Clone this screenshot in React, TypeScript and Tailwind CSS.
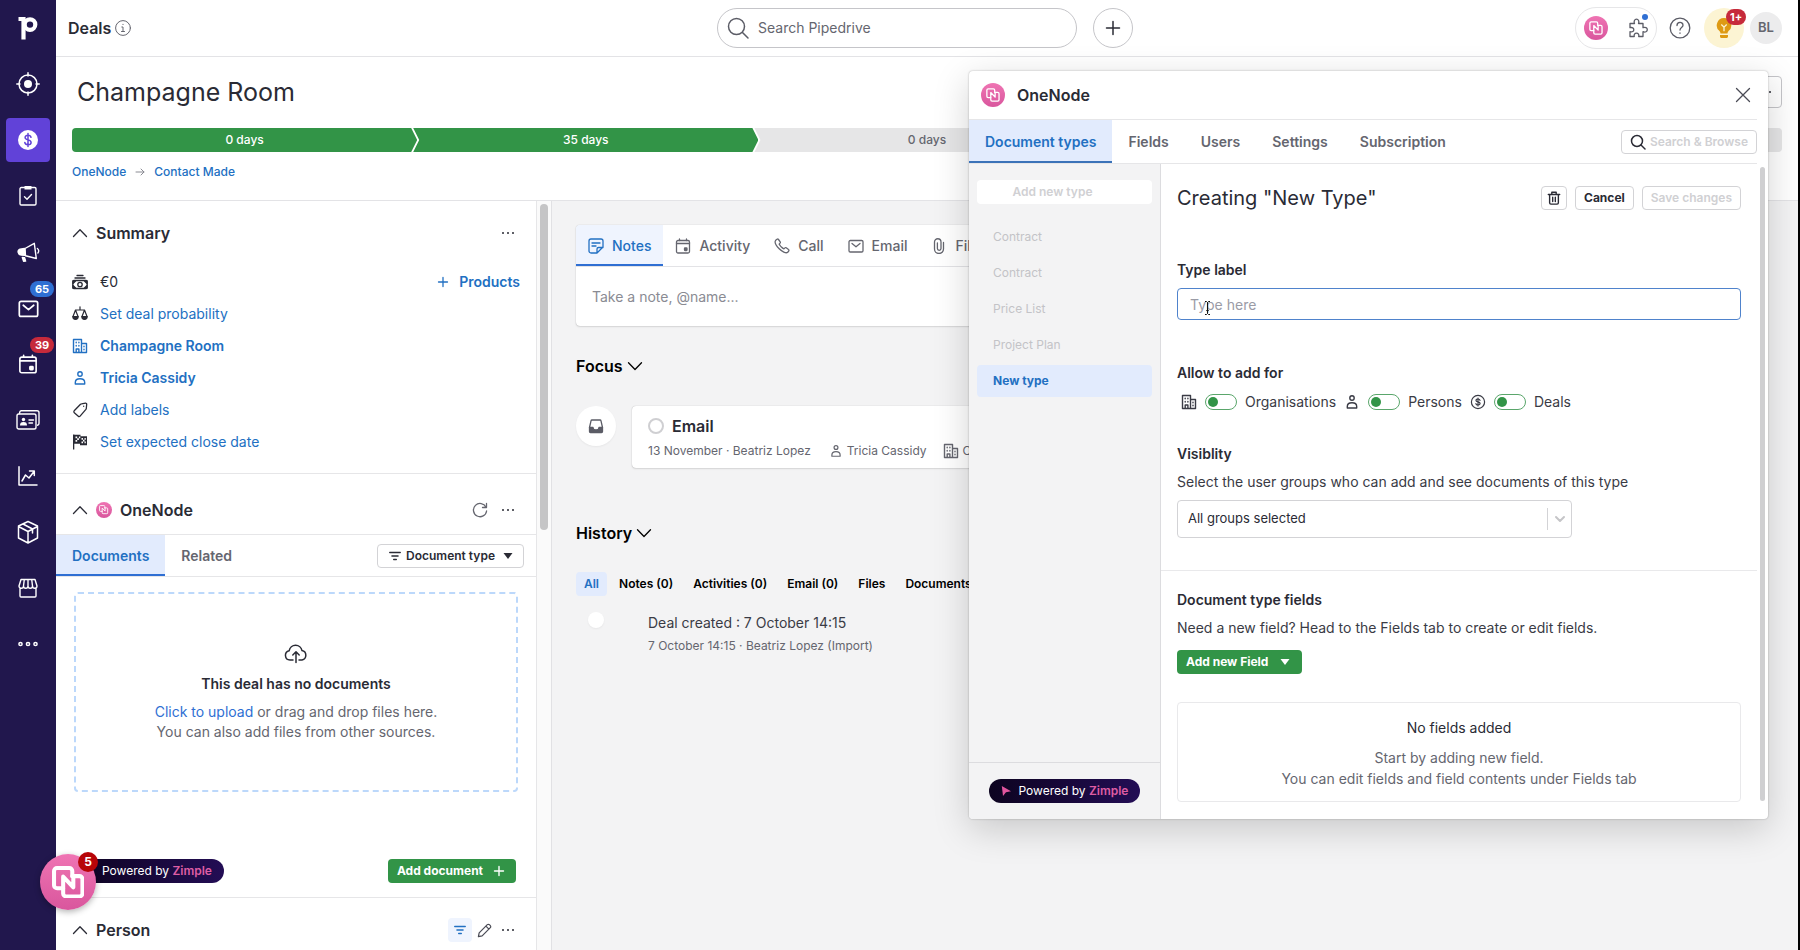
import React from "react"

type IconProps = { className?: string; children: React.ReactNode; box?: number; width?: number }

function Icon({ className = "size-4", children, box = 16, width = 1.3 }: IconProps) {
  return (
    <svg
      className={`shrink-0 ${className}`}
      viewBox={`0 0 ${box} ${box}`}
      fill="none"
      stroke="currentColor"
      strokeWidth={width}
      strokeLinecap="round"
      strokeLinejoin="round"
      aria-hidden="true"
    >
      {children}
    </svg>
  )
}

function OneNodeMark({ className, weight = 4 }: { className: string; weight?: number }) {
  return (
    <span className={`flex shrink-0 items-center justify-center rounded-full bg-linear-to-b from-[#ef74b3] to-[#d9569d] text-white ${className}`}>
      <svg className="size-[58%]" viewBox="0 0 32 32" fill="none" stroke="currentColor" strokeWidth={weight} strokeLinejoin="round" strokeLinecap="round" aria-hidden="true">
        <path d="M11 22H5a3 3 0 0 1-3-3V5a3 3 0 0 1 3-3h12a3 3 0 0 1 3 3v5" />
        <path d="M20 10h7a3 3 0 0 1 3 3v14a3 3 0 0 1-3 3H14a3 3 0 0 1-3-3V10.500l10 10.500V10" />
      </svg>
    </span>
  )
}

function Building({ className }: { className?: string }) {
  return (
    <Icon className={className} width={1.4}>
      <path d="M1.500 14.500v-13h8v13zM9.500 5.500h5v9h-13" />
      <path d="M4.200 4.200v.6M6.900 4.200v.6M4.200 7.400v.6M6.900 7.400v.6M4.200 14v-3h2.700v3M12 8.200v.6M12 11.200v.6" />
    </Icon>
  )
}

function Person({ className }: { className?: string }) {
  return (
    <Icon className={className} width={1.4}>
      <circle cx="8" cy="4" r="2.200" />
      <path d="M3.300 14v-1.500c0-2.400 1.900-3.700 4.700-3.700s4.700 1.300 4.700 3.700V14z" />
    </Icon>
  )
}

function Caret({ up = false }: { up?: boolean }) {
  return (
    <Icon>
      <path d={up ? "M1.500 11.500L8 4.800l6.500 6.700" : "M1.500 4.800L8 11.500l6.500-6.700"} />
    </Icon>
  )
}

function Dots() {
  return (
    <svg className="size-4 shrink-0" viewBox="0 0 16 16" fill="currentColor" aria-hidden="true">
      <circle cx="3" cy="8" r="1" />
      <circle cx="8" cy="8" r="1" />
      <circle cx="13" cy="8" r="1" />
    </svg>
  )
}

function Triangle() {
  return (
    <svg className="h-[6px] w-[10px] shrink-0" viewBox="0 0 10 6" fill="currentColor" aria-hidden="true">
      <path d="M.500 0h9L5 6z" />
    </svg>
  )
}

function Filter({ className }: { className?: string }) {
  return (
    <Icon className={className} width={1.6}>
      <path d="M2 4h12M4.500 8h7M6.500 12h3" />
    </Icon>
  )
}

function Calendar({ className }: { className?: string }) {
  return (
    <Icon className={className}>
      <rect x="1.500" y="2.500" width="13" height="12.500" rx="1.500" />
      <path d="M1.500 5.500h13M4.500 1v1.500M11.500 1v1.500" />
      <rect x="9.500" y="10" width="2.500" height="2.500" rx=".5" fill="currentColor" />
    </Icon>
  )
}

function Envelope({ className }: { className?: string }) {
  return (
    <Icon className={className}>
      <rect x="1" y="2.500" width="14" height="11.500" rx="1.300" />
      <path d="M4 5.500l4 3.300 4-3.300" />
    </Icon>
  )
}

function PoweredBy() {
  return (
    <a href="#zimple" className="flex h-6 items-center gap-2 rounded-full bg-linear-to-r from-[#0d0420] to-[#230d55] px-3 text-xs text-white">
      <svg className="size-[10px]" viewBox="0 0 10 10" aria-hidden="true">
        <path d="M.800 0L10 5.200 5 6.300 2 10z" fill="#e0559e" />
      </svg>
      <span>
        Powered by <b className="font-semibold text-[#de5da4]">Zimple</b>
      </span>
    </a>
  )
}

const NAV = [
  {
    name: "Leads",
    icon: (
      <Icon className="size-6" box={24} width={1.5}>
        <circle cx="12" cy="12" r="9" />
        <circle cx="12" cy="12" r="4" fill="currentColor" stroke="none" />
        <path d="M12 .800V4M12 20v3.200M.800 12H4M20 12h3.200" />
      </Icon>
    ),
  },
  {
    name: "Deals",
    active: true,
    icon: (
      <svg className="size-5" viewBox="0 0 20 20" aria-hidden="true">
        <circle cx="10" cy="10" r="10" fill="#fff" />
        <path d="M13 7.300C12.700 6 11.600 5.300 10 5.300c-1.700 0-2.900.8-2.900 2.200 0 3.200 6 1.500 6 4.900 0 1.500-1.300 2.300-3.100 2.300-1.700 0-3-.8-3.200-2.300M10 3.500v13" fill="none" stroke="#6142d8" strokeWidth="1.500" strokeLinecap="round" />
      </svg>
    ),
  },
  {
    name: "Projects",
    icon: (
      <Icon className="size-5" box={20} width={1.4}>
        <rect x="2" y="1.500" width="16" height="17.500" rx="1.300" />
        <path d="M6.500 0h7v3.500h-7z" fill="currentColor" stroke="none" />
        <path d="M6.500 10.800l2.500 2.400 4.500-4.700" />
      </Icon>
    ),
  },
  {
    name: "Campaigns",
    icon: (
      <Icon className="size-6" box={24} width={1.4}>
        <path d="M9 8.500l9.300-5.200 2 15.200L9.500 15.800z" />
        <path d="M8.500 8.500l-4.600.700a2.500 2.500 0 0 0-1.600 3.400c.5 1.900 1.500 2.500 2.900 2.500l3.800.3zM6.300 17.500l1.300 3.800 2-.2-1-3.400z" fill="currentColor" />
        <path d="M21.400 8.500a3 3 0 0 1 .5 4.500" />
      </Icon>
    ),
  },
  { name: "Mail", badge: "65", badgeClass: "bg-[#2f6fd3]", icon: <Envelope className="size-[21px]" /> },
  { name: "Activities", badge: "39", badgeClass: "bg-[#c62a3b]", icon: <Calendar className="size-5" /> },
  {
    name: "Contacts",
    icon: (
      <Icon className="size-6" box={24} width={1.4}>
        <rect x="1" y="6" width="19" height="15" rx="1.800" />
        <path d="M3.500 5.500l.3-1.600a1.500 1.500 0 0 1 1.500-1.100H21a2 2 0 0 1 2 2v10.400a2 2 0 0 1-1.500 2M13 12h4.500M13 15h3.500" />
        <circle cx="7.500" cy="11.500" r="1.700" fill="currentColor" stroke="none" />
        <path d="M4 17.500c0-2.500 1-3.500 3.500-3.500s3.500 1 3.500 3.500z" fill="currentColor" stroke="none" />
      </Icon>
    ),
  },
  {
    name: "Insights",
    icon: (
      <Icon className="size-5" box={20} width={1.5}>
        <path d="M1 .800V19h18M4 15l3.500-6 3.500 3 5-6.500M11.500 5h4.800v4.500" />
      </Icon>
    ),
  },
  {
    name: "Products",
    icon: (
      <Icon className="size-6" box={24} width={1.5}>
        <path d="M12 1.500l9.500 4.500v12L12 23l-9.500-5V6zM2.500 6.500L12 11.500l9.500-5M12 11.500V23M7 4l9.500 5v4" />
      </Icon>
    ),
  },
  {
    name: "Marketplace",
    icon: (
      <Icon className="size-5" box={20} width={1.4}>
        <path d="M3 1.500h14l2 6.500c0 3-4.500 3-4.500 0 0 3-4.500 3-4.500 0 0 3-4.500 3-4.500 0 0 3-4.500 3-4.500 0zM5.500 8l.8-6.500M14.500 8l-.8-6.500M10 8V1.500M2 10.500V18a1 1 0 0 0 1 1h14a1 1 0 0 0 1-1v-7.500" />
      </Icon>
    ),
  },
  {
    name: "More",
    icon: (
      <Icon className="size-5" box={20} width={1.5}>
        <circle cx="2.500" cy="10" r="1.600" />
        <circle cx="10" cy="10" r="1.600" />
        <circle cx="17.500" cy="10" r="1.600" />
      </Icon>
    ),
  },
]

function Sidebar() {
  return (
    <nav className="flex w-14 shrink-0 flex-col bg-[#21174d] text-white" aria-label="Main">
      <a href="#home" className="flex h-14 items-center justify-center" aria-label="Pipedrive">
        <svg className="h-6 w-5" viewBox="0 0 20 24" fill="none" stroke="currentColor" aria-hidden="true">
          <path d="M.500 3h5V23.500" strokeWidth="4.200" />
          <circle cx="12" cy="8.600" r="5.300" strokeWidth="4.200" />
        </svg>
      </a>
      {NAV.map((item) => (
        <a key={item.name} href={`#${item.name.toLowerCase()}`} aria-label={item.name} className="relative flex h-14 items-center justify-center">
          <span className={item.active ? "flex size-11 items-center justify-center rounded bg-[#6142d8]" : "flex size-11 items-center justify-center"}>
            {item.icon}
          </span>
          {item.badge && (
            <span className={`absolute top-px right-[2px] flex h-4 w-6 items-center justify-center rounded-full text-[11px] font-bold ${item.badgeClass}`}>
              {item.badge}
            </span>
          )}
        </a>
      ))}
    </nav>
  )
}

function TopBar() {
  return (
    <header className="flex h-[57px] shrink-0 items-center border-b border-[#e3e3e6] bg-white pr-4 pl-3">
      <div className="flex flex-1 items-center gap-1 text-base font-semibold">
        Deals
        <Icon className="size-4 text-[#65666f]" width={1}>
          <circle cx="8" cy="8" r="7.400" />
          <path d="M6.800 7H8v4.500M6.500 11.500h3M8 4.300v.3" />
        </Icon>
      </div>
      <div className="flex items-center gap-4">
        <label className="flex h-10 w-[360px] items-center gap-2 rounded-full border border-[#c5c5c9] px-2">
          <Icon className="size-6 text-[#5b5c66]" box={24} width={1.5}>
            <circle cx="10.500" cy="10.500" r="8" />
            <path d="M16.500 16.500L22 22" />
          </Icon>
          <input type="search" aria-label="Search Pipedrive" placeholder="Search Pipedrive" className="min-w-0 flex-1 bg-transparent text-sm outline-none placeholder:text-[#65666f]" />
        </label>
        <button type="button" aria-label="Add" className="flex size-10 items-center justify-center rounded-full border border-[#c5c5c9]">
          <Icon className="size-4" width={1.5}>
            <path d="M8 1.500v13M1.500 8h13" />
          </Icon>
        </button>
      </div>
      <div className="flex flex-1 items-center justify-end text-[#5b5c66]">
        <div className="mr-3 flex h-[42px] w-[82px] items-center justify-between rounded-full border border-[#e6e6e8] px-2">
          <OneNodeMark className="size-6" weight={3} />
          <button type="button" aria-label="Apps" className="relative">
            <Icon className="size-5" box={20} width={1.3}>
              <path d="M2 5.500h4.500c-1-2.300.2-4.300 2-4.300s3 2 2 4.300H15v4.200c2.300-1 4.300.2 4.300 2s-2 3-4.300 2V18.500h-4.300c.6-2-.5-3.300-2.200-3.300s-2.800 1.300-2.200 3.300H2v-4.800c2.300.7 3.800-.4 3.800-2s-1.500-2.700-3.800-2z" />
            </Icon>
            <span className="absolute -top-1 right-0 size-[6px] rounded-full bg-[#2f6fd3]" />
          </button>
        </div>
        <button type="button" aria-label="Help" className="mr-[13px]">
          <Icon className="size-[22px]" box={22} width={1.3}>
            <circle cx="11" cy="11" r="9.800" />
            <path d="M8 8.500c0-4 6-4 6-.3 0 2.300-3 2.300-3 4.800M11 16v.3" />
          </Icon>
        </button>
        <button type="button" aria-label="Tips" className="relative mr-[6px] flex size-10 items-center justify-center rounded-full bg-[#fcf4d3]">
          <svg className="h-5 w-4" viewBox="0 0 16 20" aria-hidden="true">
            <path d="M8 0a7.300 7.300 0 0 0-4.500 13c.7.700 1 1.500 1 2.500h7c0-1 .3-1.800 1-2.500A7.300 7.300 0 0 0 8 0zM4 17h8v1.500c0 .8-.7 1.500-1.500 1.500h-5C4.700 20 4 19.300 4 18.500z" fill="#de9a13" />
            <path d="M5.300 6.500L8 9.200l2.700-2.700M8 9.200v4" stroke="#fcf4d3" strokeWidth="1.300" fill="none" />
          </svg>
          <span className="absolute top-px -right-[2px] flex h-4 w-5 items-center justify-center rounded-full bg-[#c62a3b] text-[11px] font-bold text-white">1+</span>
        </button>
        <button type="button" className="flex size-8 items-center justify-center rounded-full bg-[#ececed] text-[13px] font-semibold text-[#65666f]">BL</button>
      </div>
    </header>
  )
}

const STAGES = [
  { days: "0 days", done: true },
  { days: "35 days", done: true },
  { days: "0 days", done: false },
  { days: "", done: false },
  { days: "", done: false },
]

function DealHeader() {
  return (
    <section className="shrink-0 border-b border-[#e3e3e6] bg-white px-4 pt-[19px] pb-[18px]">
      <div className="flex h-8 items-center justify-between">
        <h1 className="pl-[5px] text-[25px] leading-8 font-normal">Champagne Room</h1>
        <button type="button" aria-label="More actions" className="flex h-8 w-10 items-center justify-end rounded border border-[#c5c5c9] pr-2">
          <Dots />
        </button>
      </div>
      <ol className="mt-5 flex h-6 overflow-hidden rounded text-xs leading-6 font-medium">
        {STAGES.map((stage, i) => (
          <li
            key={i}
            className={
              (i === 0
                ? "[clip-path:polygon(0_0,calc(100%-6px)_0,100%_50%,calc(100%-6px)_100%,0_100%)] "
                : i === STAGES.length - 1
                  ? "-ml-1 [clip-path:polygon(0_0,100%_0,100%_100%,0_100%,6px_50%)] "
                  : "-ml-1 [clip-path:polygon(0_0,calc(100%-6px)_0,100%_50%,calc(100%-6px)_100%,0_100%,6px_50%)] ") +
              (stage.done ? "flex-1 bg-[#329447] text-center text-white" : "flex-1 bg-[#e6e6e7] text-center text-[#65666f]")
            }
          >
            {stage.days}
          </li>
        ))}
      </ol>
      <div className="mt-[10px] flex h-5 items-center gap-2 text-xs font-medium text-[#2270c2]">
        <a href="#pipeline">OneNode</a>
        <Icon className="size-3 text-[#8a8b93]" box={12} width={1}>
          <path d="M2 6h8M7 3l3 3-3 3" />
        </Icon>
        <a href="#stage">Contact Made</a>
      </div>
    </section>
  )
}

const SUMMARY = [
  {
    text: "Set deal probability",
    strong: false,
    icon: (
      <Icon className="size-4" width={1.2}>
        <path d="M8 .800V4M3.500 4h9M3.500 4L1 10.500M3.500 4L6 10.500M12.500 4L10 10.500M12.500 4l2.500 6.500" />
        <path d="M.800 10.500h5.400c0 3.800-5.400 3.800-5.400 0zM9.800 10.500h5.400c0 3.800-5.400 3.800-5.400 0z" fill="currentColor" />
      </Icon>
    ),
  },
  { text: "Champagne Room", strong: true, icon: <Building className="size-4 text-[#2270c2]" /> },
  { text: "Tricia Cassidy", strong: true, icon: <Person className="size-4 text-[#2270c2]" /> },
  {
    text: "Add labels",
    strong: false,
    icon: (
      <Icon className="size-4" width={1.3}>
        <path d="M9.500 1.800l4-.6c.7-.1 1.200.4 1.200 1.100l-.4 4.200c0 .3-.2.600-.4.900l-5.800 6.700c-.5.600-1.300.6-1.800.1l-4-3.500c-.6-.5-.6-1.300-.1-1.900l6.300-6.600c.3-.2.600-.4 1-.4zM11.700 4.200v.1" />
      </Icon>
    ),
  },
  {
    text: "Set expected close date",
    strong: false,
    icon: (
      <svg className="size-4" viewBox="0 0 16 16" fill="currentColor" aria-hidden="true">
        <path d="M1 .500h1.300V15.500H1z" />
        <path fillRule="evenodd" d="M2 .800h6.500v1.500H15v9H8V9.800H2zM3.500 2.500v1.700h1.700V2.500zM5.200 4.200v1.700h1.700V4.200zM3.500 6v1.700h1.700V6zM6.900 2.500v1.700h1.400V2.500zM9.500 4v1.700h1.500V4zM11 5.700v1.700h1.500V5.700zM12.500 4v1.700h1.300V4zM9.500 7.600v1.700h1.500V7.600zM12.500 7.600v1.700h1.300V7.600z" />
      </svg>
    ),
  },
]

function DetailColumn() {
  return (
    <aside className="flex w-[496px] shrink-0 overflow-hidden border-r border-[#e1e1e4] bg-[#fafafa]">
      <div className="min-w-0 flex-1 border-r border-[#e6e6e8] bg-white">
        <section className="px-4 pt-4 pb-[15px]">
          <div className="flex h-8 items-center gap-2">
            <Caret up />
            <h2 className="flex-1 text-base font-semibold">Summary</h2>
            <button type="button" aria-label="Summary options" className="mr-1"><Dots /></button>
          </div>
          <ul className="mt-[17px] text-sm">
            <li className="flex h-8 items-center gap-3">
              <Icon className="size-4" width={1.3}>
                <path d="M5 1.500h6M3 4h10" />
                <rect x=".8" y="6.500" width="14.400" height="8" rx="1" />
                <circle cx="8" cy="10.500" r="2.200" />
                <path d="M1 7h2.500L1 9.500zM15 7h-2.500L15 9.500zM1 14h2.500L1 11.500zM15 14h-2.500L15 11.500z" fill="currentColor" />
              </Icon>
              <span className="flex-1">€0</span>
              <button type="button" className="flex items-center gap-2 font-semibold text-[#2270c2]">
                <Icon className="size-4" width={1.3}>
                  <path d="M8 3.500v9M3.500 8h9" />
                </Icon>
                Products
              </button>
            </li>
            {SUMMARY.map((row) => (
              <li key={row.text} className="flex h-8 items-center gap-3">
                {row.icon}
                <a href="#edit" className={row.strong ? "font-semibold text-[#2270c2]" : "text-[#2270c2]"}>{row.text}</a>
              </li>
            ))}
          </ul>
        </section>

        <section className="border-t border-[#e6e6e8]">
          <div className="flex h-[60px] items-center gap-2 px-4 pt-3">
            <Caret up />
            <OneNodeMark className="size-4" weight={3} />
            <h2 className="flex-1 text-base font-semibold">OneNode</h2>
            <button type="button" aria-label="Refresh" className="text-[#65666f]">
              <Icon>
                <path d="M14 5.200A6.600 6.600 0 1 0 14.600 9M14.500 1.500v4h-4" />
              </Icon>
            </button>
            <button type="button" aria-label="OneNode options" className="mr-1 ml-1"><Dots /></button>
          </div>
          <div className="flex h-[43px] items-center border-y border-[#e6e6e8] text-sm font-semibold text-[#65666f]">
            <button type="button" className="h-full bg-[#e2ebfd] px-4 text-[#2270c2] shadow-[inset_0_-2px_0_#2f6fd3]">Documents</button>
            <button type="button" className="h-full px-4">Related</button>
            <button type="button" className="mr-3 ml-auto flex h-6 items-center gap-1 rounded border border-[#d3d3d6] px-[10px] text-xs font-semibold text-[#2a2b35]">
              <Filter className="size-[14px]" />
              Document type
              <span className="ml-1 flex"><Triangle /></span>
            </button>
          </div>
          <div className="px-4 pt-[15px]">
            <div className="mx-[2px] flex h-[200px] flex-col items-center rounded border-2 border-dashed border-[#bcd8fb] pt-12 text-center text-sm leading-5 text-[#65666f]">
              <Icon className="size-6 text-[#2a2b35]" box={24} width={1.5}>
                <path d="M9 18H6a4.700 4.700 0 0 1-.8-9.300A6.500 6.500 0 0 1 18 8.600 4.800 4.800 0 0 1 18 18h-3M12 20.500V10M8.800 13L12 9.800l3.200 3.200" />
              </Icon>
              <h3 className="mt-2 font-semibold text-[#2a2b35]">This deal has no documents</h3>
              <p className="mt-2">
                <a href="#upload" className="text-[#2f6fd3]">Click to upload</a> or drag and drop files here.
                <br />
                You can also add files from other sources.
              </p>
            </div>
            <div className="mt-[67px] mb-[14px] flex h-6 items-center justify-between">
              <PoweredBy />
              <button type="button" className="mr-1 flex h-6 items-center gap-2 rounded bg-[#329447] px-[9px] text-xs font-bold text-white">
                Add document
                <Icon className="size-4" width={1.4}>
                  <path d="M8 3.500v9M3.500 8h9" />
                </Icon>
              </button>
            </div>
          </div>
        </section>

        <section className="border-t border-[#e6e6e8] px-4 py-4">
          <div className="flex h-8 items-center gap-2">
            <Caret up />
            <h2 className="flex-1 text-base font-semibold">Person</h2>
            <button type="button" aria-label="Filter fields" className="flex size-6 items-center justify-center rounded bg-[#eff4fe] text-[#2270c2]"><Filter className="size-[14px]" /></button>
            <button type="button" aria-label="Edit" className="-ml-2 flex size-6 items-center justify-center text-[#4a4b55]">
              <Icon className="size-[15px]">
                <path d="M1.500 14.500l.8-4L11 1.800c.6-.6 1.600-.6 2.200 0l1 1c.6.600.6 1.600 0 2.200l-8.700 8.700zM9.500 3.300l3.200 3.200" />
              </Icon>
            </button>
            <button type="button" aria-label="Person options" className="mr-1 -ml-1"><Dots /></button>
          </div>
        </section>
      </div>
      <div className="w-[14px] px-[3px] pt-[3px]">
        <div className="h-[326px] rounded-full bg-[#c5c5c6]" />
      </div>
    </aside>
  )
}

const NOTE_TABS = [
  {
    name: "Notes",
    icon: (
      <Icon>
        <path d="M9 15H3a2 2 0 0 1-2-2V3a2 2 0 0 1 2-2h10a2 2 0 0 1 2 2v6l-6 6V11a1.500 1.500 0 0 1 1.500-1.500H15M4 5h8M4 8h4" />
      </Icon>
    ),
  },
  { name: "Activity", icon: <Calendar /> },
  {
    name: "Call",
    icon: (
      <Icon>
        <path d="M3 1.300l-1.300 1C.300 4 2.500 8 5.200 10.800S12 15.700 13.700 14.300l1-1.300c.4-.5.3-1.200-.2-1.500l-2.300-1.700c-.4-.3-1-.3-1.300.1l-1 1c-1.500-.6-4.200-3.300-4.800-4.800l1-1c.4-.3.4-.9.1-1.300L4.500 1.500C4.200 1 3.500 1 3 1.300z" />
      </Icon>
    ),
  },
  { name: "Email", icon: <Envelope /> },
  {
    name: "Files",
    icon: (
      <Icon>
        <path d="M12.500 4.500v6.500a4.500 4.500 0 0 1-9 0V4a3 3 0 0 1 6.500 0v6.500a1.800 1.800 0 0 1-3.600 0V5" />
      </Icon>
    ),
  },
]

const HISTORY_TABS = ["Notes (0)", "Activities (0)", "Email (0)", "Files", "Documents (0)"]

function Timeline() {
  return (
    <main className="min-w-0 flex-1 bg-[#f3f3f4] pt-6 pr-10 pl-6">
      <div className="rounded bg-white shadow-[0_0_1px_rgba(0,0,0,0.3),0_1px_2px_rgba(0,0,0,0.1)]">
        <div className="flex h-[42px] overflow-hidden rounded-t border-b border-[#e3e3e6] text-sm font-medium text-[#65666f]">
          {NOTE_TABS.map((tab, i) => (
            <button
              key={tab.name}
              type="button"
              className={i === 0 ? "flex items-center gap-2 bg-[#eff4fe] px-3 text-[#2270c2] shadow-[inset_0_-2px_0_#2f6fd3]" : "flex items-center gap-2 px-3"}
            >
              {tab.icon}
              {tab.name}
            </button>
          ))}
        </div>
        <input aria-label="Note" placeholder="Take a note, @name..." className="block h-[59px] w-full px-4 text-sm outline-none placeholder:text-[#8a8b93]" />
      </div>

      <h2 className="mt-7 flex h-6 items-center gap-1 text-base font-semibold text-black">
        Focus <Caret />
      </h2>
      <div className="mt-7 flex items-start gap-4">
        <span className="flex size-10 shrink-0 items-center justify-center rounded-full bg-white text-[#5b5c66] shadow-xs">
          <Icon>
            <path d="M1.500 9.500L3 2.800c.1-.5.5-.8 1-.8h8c.5 0 .9.300 1 .8l1.500 6.700" />
            <path d="M1.500 9.500H5c0 1.700 1.200 2.500 3 2.500s3-.8 3-2.500h3.500v4c0 .6-.4 1-1 1h-11c-.6 0-1-.4-1-1z" fill="currentColor" />
          </Icon>
        </span>
        <article className="h-[62px] min-w-0 flex-1 rounded bg-white px-4 pt-2 shadow-[0_0_1px_rgba(0,0,0,0.3),0_1px_2px_rgba(0,0,0,0.1)]">
          <label className="flex h-6 items-center gap-2 text-base font-semibold">
            <input type="checkbox" className="size-4 appearance-none rounded-full border-2 border-[#cfcfd2]" />
            Email
          </label>
          <p className="mt-1 flex items-center text-xs leading-[18px] whitespace-nowrap text-[#65666f]">
            13 November · Beatriz Lopez
            <Person className="mr-1 ml-[18px] size-[14px]" />
            Tricia Cassidy
            <Building className="mr-1 ml-4 size-4" />
            Champagne Room
          </p>
        </article>
      </div>

      <h2 className="mt-[53px] flex h-6 items-center gap-1 text-base font-semibold text-black">
        History <Caret />
      </h2>
      <div className="mt-[27px] flex gap-1 text-xs leading-6 font-semibold text-black">
        <button type="button" className="rounded bg-[#e2ebfd] px-2 text-[#2270c2]">All</button>
        {HISTORY_TABS.map((tab) => (
          <button key={tab} type="button" className="px-2 whitespace-nowrap">{tab}</button>
        ))}
      </div>
      <div className="mt-4 flex items-start gap-11 pl-3">
        <span className="size-4 shrink-0 rounded-full bg-white shadow-xs" />
        <div>
          <p className="text-sm leading-[22px] text-[#3a3b45]">Deal created : 7 October 14:15</p>
          <p className="mt-[2px] text-xs leading-5 text-[#65666f]">7 October 14:15 · Beatriz Lopez (Import)</p>
        </div>
      </div>
    </main>
  )
}

const TABS = ["Document types", "Fields", "Users", "Settings", "Subscription"]
const TYPES = ["Contract", "Contract", "Price List", "Project Plan"]

const TARGETS = [
  { name: "Organisations", icon: <Building className="size-4" /> },
  { name: "Persons", icon: <Person className="size-4" /> },
  {
    name: "Deals",
    icon: (
      <Icon className="size-4" width={1.2}>
        <circle cx="8" cy="8" r="6.600" />
        <path d="M10 6.300C9.800 5.500 9 5 8 5c-1.200 0-2 .5-2 1.400 0 2 4.100 1 4.100 3.100 0 1-.9 1.500-2.100 1.500S6 10.500 5.900 9.600M8 4v8" />
      </Icon>
    ),
  },
]

function TypeForm() {
  return (
    <form className="min-w-0 flex-1 pt-[22px]">
      <div className="flex h-6 items-center gap-2 px-4">
        <h2 className="flex-1 text-xl font-normal">Creating "New Type"</h2>
        <button type="button" aria-label="Delete" className="flex h-6 w-[26px] items-center justify-center rounded border border-[#d3d3d6]">
          <Icon className="size-[14px]" width={1.6}>
            <path d="M1.500 4h13M5.500 4V1.500h5V4M3 4v9.500c0 .8.700 1.500 1.500 1.500h7c.8 0 1.500-.7 1.500-1.500V4M6.500 7v5M9.500 7v5" />
          </Icon>
        </button>
        <button type="button" className="h-6 rounded border border-[#d3d3d6] px-2 text-xs font-bold">Cancel</button>
        <button type="button" disabled className="h-6 rounded border border-[#d3d3d6] px-2 text-xs font-semibold text-[#d0d0d3]">Save changes</button>
      </div>

      <div className="px-4 pt-[50px] pb-8">
        <label htmlFor="type-label" className="block text-sm leading-5 font-semibold">Type label</label>
        <div className="relative mt-2">
          <input id="type-label" placeholder="Type here" className="block h-8 w-full rounded border border-[#4f83cc] px-3 text-sm outline-none placeholder:text-[#9a9ba6]" />
          <svg className="absolute top-[13px] left-[27px] h-[14px] w-[7px]" viewBox="0 0 7 14" fill="none" stroke="#111" aria-hidden="true">
            <path d="M1 .500h1.500l1 1 1-1H6M1 13.500h1.500l1-1 1 1H6M3.500 1.500v11M2.300 9.500h2.400" />
          </svg>
        </div>

        <h3 className="mt-[43px] text-sm leading-5 font-semibold">Allow to add for</h3>
        <div className="mt-2 flex h-[22px] items-center gap-2 pl-1 text-sm text-[#3a3b45]">
          {TARGETS.map((target) => (
            <label key={target.name} className="flex items-center gap-2">
              {target.icon}
              <input
                type="checkbox"
                role="switch"
                className="flex h-4 w-8 appearance-none items-center rounded-full border border-[#5aa66b] pl-[2px] before:size-[10px] before:rounded-full before:bg-[#329447] before:content-['']"
              />
              {target.name}
            </label>
          ))}
        </div>

        <label htmlFor="groups" className="mt-[31px] block text-sm leading-5 font-semibold">Visiblity</label>
        <p className="mt-2 text-sm leading-5 text-[#3a3b45]">Select the user groups who can add and see documents of this type</p>
        <div className="relative mt-2 w-[395px]">
          <select id="groups" className="h-[38px] w-full appearance-none rounded border border-[#d3d3d6] bg-white px-[10px] text-[13px]">
            <option>All groups selected</option>
          </select>
          <span className="pointer-events-none absolute inset-y-2 right-0 flex items-center border-l border-[#d3d3d6] px-[6px] text-[#c5c5c8]">
            <Icon className="size-3" box={12} width={2}>
              <path d="M2 4l4 4 4-4" />
            </Icon>
          </span>
        </div>
      </div>

      <div className="border-t border-[#e9e9eb] px-4 pt-[19px]">
        <h3 className="text-sm leading-5 font-semibold">Document type fields</h3>
        <p className="mt-2 text-sm leading-5 text-[#3a3b45]">Need a new field? Head to the Fields tab to create or edit fields.</p>
        <button type="button" className="mt-3 flex h-6 items-center gap-3 rounded bg-[#329447] pr-3 pl-[9px] text-xs font-bold text-white">
          Add new Field
          <Triangle />
        </button>
        <div className="mt-7 rounded-sm border border-[#e9e9eb] px-4 pt-[15px] pb-3 text-center text-sm text-[#65666f]">
          <h4 className="leading-5 text-[#2a2b35]">No fields added</h4>
          <p className="mt-[9px] leading-[21px]">
            Start by adding new field.
            <br />
            You can edit fields and field contents under Fields tab
          </p>
        </div>
      </div>
    </form>
  )
}

function OneNodeDialog() {
  return (
    <div role="dialog" aria-label="OneNode" className="absolute top-[71px] right-[30px] flex h-[748px] w-[799px] overflow-hidden rounded bg-white shadow-[0_10px_36px_rgba(0,0,0,0.18),0_0_2px_rgba(0,0,0,0.3)]">
      <div className="flex min-w-0 flex-1 flex-col">
        <div className="flex h-12 shrink-0 items-center gap-3 pr-[6px] pl-3">
          <OneNodeMark className="size-6" weight={3} />
          <h2 className="flex-1 text-base font-semibold">OneNode</h2>
          <button type="button" aria-label="Close" className="text-[#4a4b55]">
            <Icon>
              <path d="M1.500 1.500l13 13M14.500 1.500l-13 13" />
            </Icon>
          </button>
        </div>
        <div className="flex h-[45px] shrink-0 items-center border-y border-[#e6e6e8] text-sm font-semibold text-[#65666f]">
          {TABS.map((tab, i) => (
            <button key={tab} type="button" className={i === 0 ? "h-full bg-[#e2ebfd] px-4 text-[#2270c2] shadow-[inset_0_-2px_0_#3b72b8]" : "h-full px-4"}>
              {tab}
            </button>
          ))}
          <button type="button" className="ml-auto flex h-6 items-center gap-1 rounded border border-[#d3d3d6] px-2 text-xs font-semibold text-[#d0d0d3]">
            <Icon className="size-4 text-[#2a2b35]" width={1.5}>
              <circle cx="7" cy="7" r="5.500" />
              <path d="M11 11l4 4" />
            </Icon>
            Search &amp; Browse
          </button>
        </div>
        <div className="flex min-h-0 flex-1">
          <div className="flex w-48 shrink-0 flex-col border-r border-[#dcdcdf] bg-[#f3f3f4] text-xs text-[#c3c3c7]">
            <button type="button" disabled className="mx-2 mt-4 h-6 rounded bg-white pr-6 font-semibold text-[#d0d0d3]">Add new type</button>
            <ul className="mt-[17px] flex flex-1 flex-col gap-1 px-2">
              {TYPES.map((type, i) => (
                <li key={i} className="px-4 leading-8">{type}</li>
              ))}
              <li className="rounded bg-[#e2ebfd] px-4 leading-8 font-bold text-[#2270c2]">New type</li>
            </ul>
            <div className="flex h-[57px] items-center justify-center border-t border-[#dcdcdf]">
              <PoweredBy />
            </div>
          </div>
          <TypeForm />
        </div>
      </div>
      <div className="w-[11px] px-[3px] pt-24 pb-[18px]">
        <div className="h-full rounded-full bg-[#cfcfd1]" />
      </div>
    </div>
  )
}

export default function App() {
  return (
    <div className="relative flex h-screen overflow-hidden border-r-2 border-black bg-white font-['Inter',sans-serif] text-[#2a2b35]">
      <Sidebar />
      <div className="flex min-w-0 flex-1 flex-col">
        <TopBar />
        <DealHeader />
        <div className="flex min-h-0 flex-1">
          <DetailColumn />
          <Timeline />
        </div>
      </div>
      <OneNodeDialog />
      <button type="button" aria-label="Open OneNode" className="absolute bottom-10 left-10 rounded-full shadow-[0_2px_6px_rgba(0,0,0,0.3)]">
        <OneNodeMark className="size-14" weight={4} />
        <span className="absolute -top-[2px] -right-[2px] flex size-5 items-center justify-center rounded-full bg-[#b70508] text-xs font-bold text-white">5</span>
      </button>
    </div>
  )
}
